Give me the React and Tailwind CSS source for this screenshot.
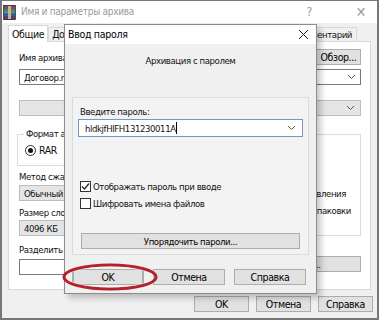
import React from "react";

const Chevron = ({ className = "" }) => (
  <svg width="9" height="6" viewBox="0 0 9 6" className={className}>
    <polyline points="1,1 4.5,4.5 8,1" fill="none" stroke="#555" strokeWidth="1" />
  </svg>
);

const RarIcon = () => (
  <svg width="13" height="15" viewBox="0 0 13 15">
    <rect x="1" y="0.5" width="11" height="3.5" fill="#8e3a8a" />
    <rect x="1" y="4" width="11" height="3.5" fill="#3d8f4a" />
    <rect x="1" y="7.5" width="11" height="3.5" fill="#2f5fa8" />
    <rect x="1" y="11" width="11" height="3.5" fill="#5a3c7a" />
    <rect x="5" y="0" width="3" height="15" fill="#c9b48a" />
    <rect x="0.5" y="0.5" width="12" height="14" fill="none" stroke="#222" strokeWidth="0.8" />
  </svg>
);

const CheckBox = ({ checked }) => (
  <div className="w-[11px] h-[11px] border border-[#333] bg-white flex items-center justify-center shrink-0">
    {checked && (
      <svg width="9" height="9" viewBox="0 0 9 9">
        <polyline points="1,4.5 3.5,7 8,1.5" fill="none" stroke="#222" strokeWidth="1.2" />
      </svg>
    )}
  </div>
);

const WinButton = ({ children, className = "" }) => (
  <div
    className={`h-[16px] bg-[#e1e1e1] border border-[#adadad] flex items-center justify-center text-black whitespace-nowrap ${className}`}
  >
    {children}
  </div>
);

export default function App() {
  return (
    <div className="relative w-[379px] h-[320px] overflow-hidden bg-[#f0f0f0] font-['Liberation_Sans_Narrow','DejaVu_Sans_Condensed',sans-serif] text-[9.5px] tracking-[-0.4px] leading-[13px] text-[#111] border-x-2 border-b-2 border-t border-[#777]">
      {/* Title bar of background window */}
      <div className="h-[22px] bg-white flex items-center">
        <div className="ml-[1px] mt-[1px]">
          <RarIcon />
        </div>
        <div className="ml-[5px] text-[10px] tracking-[-0.3px] text-[#9a9a9a] leading-none">Имя и параметры архива</div>
        <div className="ml-auto mr-[44px] text-[12px] text-[#9a9a9a] leading-none">?</div>
        <div className="mr-[11px] text-[14px] text-[#9a9a9a] leading-none font-light">✕</div>
      </div>

      {/* Tabs */}
      <div className="flex items-end h-[18px] px-[6px]">
        <div className="h-[17px] bg-white border border-b-0 border-[#d9d9d9] px-[3px] flex items-center relative z-10 -mb-px text-[10.5px]">
          Общие
        </div>
        <div className="h-[14px] border border-b-0 border-[#d9d9d9] px-[3px] flex items-center text-[10.5px]">Дополнительно</div>
        <div className="ml-auto mr-[14px] h-[14px] border border-b-0 border-[#d9d9d9] px-[4px] flex items-center">
          Комментарий
        </div>
      </div>

      {/* Tab panel */}
      <div className="ml-[6px] w-[363px] h-[249px] bg-white border border-[#d9d9d9] flex flex-col pl-[10px] pr-[9px] pt-[7px]">
        <div className="flex items-end h-[16px]">
          <div className="mb-[1px]">Имя архива:</div>
          <WinButton className="ml-auto w-[45px] h-[16px] text-[10.5px]">Обзор...</WinButton>
        </div>
        <div className="mt-[4px] h-[16px] border border-[#7a7a7a] bg-white flex items-center pl-[4px] pr-[4px]">
          <span>Договор.rar</span>
          <Chevron className="ml-auto" />
        </div>
        <div className="mt-[15px] h-[16px] border border-[#bcbcbc] bg-[#e5e5e5] flex items-center pr-[5px]">
          <Chevron className="ml-auto" />
        </div>

        <div className="flex mt-[18px] gap-[10px]">
          {/* left column */}
          <div className="w-[165px] flex flex-col">
            <div className="relative border border-[#dcdcdc] h-[32px] -ml-[2px]">
              <div className="absolute -top-[8px] left-[6px] bg-white px-[2px]">Формат архива</div>
              <div className="flex items-center mt-[9px] ml-[7px] gap-[3px]">
                <div className="w-[11px] h-[11px] rounded-full border border-[#333] flex items-center justify-center">
                  <div className="w-[5px] h-[5px] rounded-full bg-[#111]" />
                </div>
                <span className="text-[10.5px]">RAR</span>
              </div>
            </div>
            <div className="mt-[4px]">Метод сжатия:</div>
            <div className="mt-[2px] h-[16px] border border-[#bcbcbc] bg-[#e5e5e5] flex items-center pl-[4px]">Обычный</div>
            <div className="mt-[5px]">Размер словаря:</div>
            <div className="mt-[1px] h-[16px] border border-[#bcbcbc] bg-[#e5e5e5] flex items-center pl-[4px]">4096 КБ</div>
            <div className="mt-[7px]">Разделить на тома размером:</div>
            <div className="mt-[3px] h-[16px] border border-[#7a7a7a] bg-white" />
          </div>
          {/* right column */}
          <div className="flex-1 flex flex-col min-w-0">
            <div className="h-[102px] border border-[#dcdcdc] flex flex-col justify-end pb-[18px] gap-[4px]">
              <div className="flex justify-end pr-[14px] whitespace-nowrap">Добавить запись восстановления</div>
              <div className="flex justify-end pr-[9px] whitespace-nowrap">Протестировать файлы после упаковки</div>
            </div>
            <WinButton className="mt-[20px] h-[16px]">Установить пароль...</WinButton>
          </div>
        </div>
      </div>

      {/* Bottom buttons of background window */}
      <div className="flex justify-end gap-[7px] pr-[4px] mt-[6px] text-[10.5px]">
        <WinButton className="w-[55px]">OK</WinButton>
        <WinButton className="w-[55px]">Отмена</WinButton>
        <WinButton className="w-[55px]">Справка</WinButton>
      </div>

      {/* Password dialog (overlay) */}
      <div className="absolute left-[62px] top-[23px] w-[253px] h-[270px] bg-[#f0f0f0] border border-[#8c8c8c] shadow-[4px_4px_6px_rgba(0,0,0,0.22)] flex flex-col">
        <div className="h-[19px] bg-white flex items-center pl-[3px] pr-[7px]">
          <span className="text-[10.5px] tracking-[-0.3px] text-black">Ввод пароля</span>
          <svg width="11" height="11" viewBox="0 0 11 11" className="ml-auto">
            <path d="M1 1 L10 10 M10 1 L1 10" stroke="#222" strokeWidth="1" />
          </svg>
        </div>
        <div className="flex flex-col flex-1">
          <div className="text-center mt-[10px]">Архивация с паролем</div>
          <div className="mx-[7px] mt-[30px] h-[158px] bg-[#f3f3f3] border border-[#dcdcdc] flex flex-col px-[5px]">
            <div className="mt-[7px] ml-[2px]">Введите пароль:</div>
            <div className="mt-[1px] h-[18px] bg-white border border-[#6f9ac4] flex items-center pl-[6px] pr-[6px]">
              <span>hldkjfHIFH131230011A</span>
              <span className="w-px h-[12px] bg-black" />
              <Chevron className="ml-auto" />
            </div>
            <div className="mt-[43px] ml-[2px] flex items-center gap-[2px] h-[13px]">
              <CheckBox checked />
              <span>Отображать пароль при вводе</span>
            </div>
            <div className="mt-[4px] ml-[2px] flex items-center gap-[2px] h-[13px]">
              <CheckBox />
              <span>Шифровать имена файлов</span>
            </div>
            <WinButton className="mt-[23px] mx-[3px] h-[15px]">Упорядочить пароли...</WinButton>
          </div>
          <div className="flex mt-[14px] px-[7px] gap-[9px] text-[10.5px]">
            <WinButton className="w-[72px] border-[#0078d7] border-x-2">OK</WinButton>
            <WinButton className="w-[72px]">Отмена</WinButton>
            <WinButton className="w-[72px]">Справка</WinButton>
          </div>
        </div>
      </div>

      {/* red highlight ellipse */}
      <svg className="absolute left-[59px] top-[262px]" width="98" height="28" viewBox="0 0 98 28">
        <ellipse cx="49" cy="14" rx="46" ry="12" fill="none" stroke="#b4222e" strokeWidth="3" />
        <ellipse cx="49" cy="14" rx="43.5" ry="10" fill="none" stroke="#ffffff" strokeWidth="0.8" opacity="0.6" />
      </svg>
    </div>
  );
}
